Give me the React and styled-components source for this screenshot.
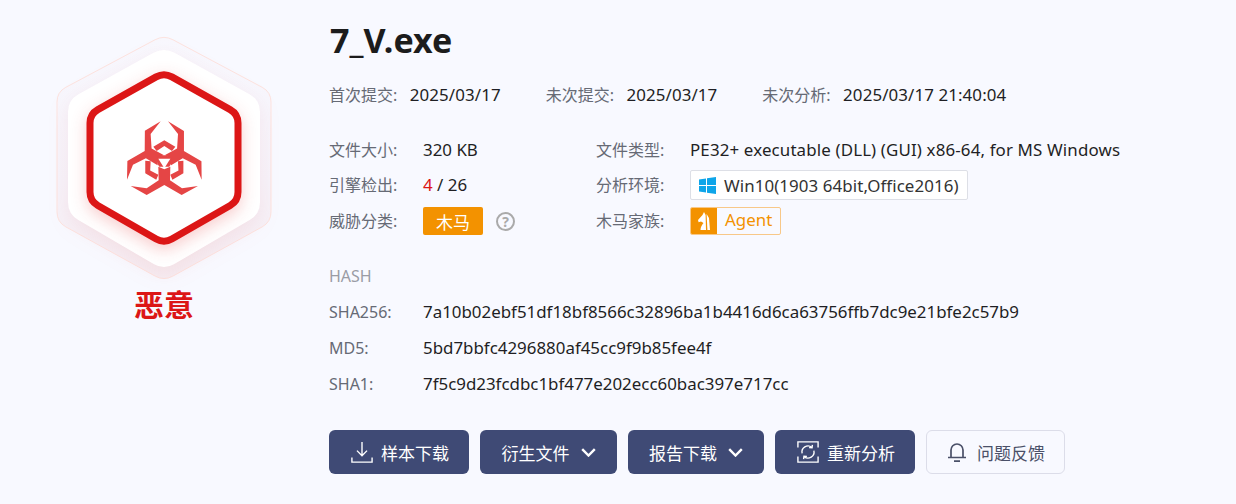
import React from "react";
import styled, { createGlobalStyle } from "styled-components";

const FONT = `"Noto Sans", "Noto Sans CJK SC", sans-serif`;

// polygon with rounded corners, used for the three shield outlines
const roundedHex = (points, r) => {
  const n = points.length;
  let d = "";
  points.forEach((p, i) => {
    const prev = points[(i + n - 1) % n];
    const next = points[(i + 1) % n];
    const toward = (a, b) => {
      const len = Math.hypot(b[0] - a[0], b[1] - a[1]);
      return [a[0] + ((b[0] - a[0]) * r) / len, a[1] + ((b[1] - a[1]) * r) / len];
    };
    const s = toward(p, prev);
    const e = toward(p, next);
    d += `${i === 0 ? "M" : "L"}${s[0]} ${s[1]} Q${p[0]} ${p[1]} ${e[0]} ${e[1]} `;
  });
  return d + "Z";
};

const hex = (cx, top, bottom, halfW, upper, lower) => [
  [cx, top],
  [cx + halfW, upper],
  [cx + halfW, lower],
  [cx, bottom],
  [cx - halfW, lower],
  [cx - halfW, upper],
];

const HAZARD_Y =
  "M62 228 L110 255 L163 225 L215 255 L264 228 L216 235 L180 211 L181 170 L163 178 L145 170 L146 211 L110 235 Z";
const HAZARD_CHEVRON = "M130 110 L163 91 L196 110 L186 123 L163 108 L140 123 Z";
const HAZARD_CORE = "M143 162 L142 145 L158 136 L168 136 L184 145 L183 162 L178 170 L148 170 Z";

const Biohazard = () => (
  <g transform="translate(110 110) scale(0.3333)">
    {[0, 120, 240].map((a) => (
      <g key={a} transform={`rotate(${a} 163 157)`} fill="#e54545">
        <path d={HAZARD_Y} />
        <path d={HAZARD_CHEVRON} />
      </g>
    ))}
    <path d={HAZARD_CORE} fill="#e54545" />
    <path d="M145 146 L181 146 L163 175 Z" fill="#ffffff" />
  </g>
);

const Shield = () => (
  <ShieldSvg viewBox="40 20 248 268">
    <defs>
      <linearGradient id="outerFill" x1="0" y1="0" x2="0" y2="1">
        <stop offset="0" stopColor="#f8f8fe" />
        <stop offset="0.6" stopColor="#f6f3fa" />
        <stop offset="1" stopColor="#f6edf2" />
      </linearGradient>
    </defs>
    <OuterHex fill="url(#outerFill)" d={roundedHex(hex(164, 35, 281, 107, 92, 222), 10)} />
    <MiddleHex d={roundedHex(hex(164, 47, 270, 96, 100, 214), 12)} />
    <InnerHex d={roundedHex(hex(164, 72.5, 243.5, 74, 114, 201), 9)} />
    <Biohazard />
  </ShieldSvg>
);

const DownloadIcon = () => (
  <ButtonSvg viewBox="0 0 24 24">
    <path d="M12 1v15M6.5 10.5l5.5 5.5 5.5-5.5M1 18v5h22v-5" />
  </ButtonSvg>
);

const ReanalyzeIcon = () => (
  <ButtonSvg viewBox="0 0 24 24">
    <path d="M1 7V1h22v6M1 17v6h22v-6" />
    <path d="M5.6 13.5a6.6 6.6 0 0 1 10.6-6.6M18.4 10.5a6.6 6.6 0 0 1-10.6 6.6" />
    <path d="M16.8 4.2l-.4 3.2-3.2-.3M7.2 19.8l.4-3.2 3.2.3" />
  </ButtonSvg>
);

const BellIcon = () => (
  <BellSvg viewBox="0 0 18 20">
    <path d="M0 15.5h18M3 15.5V8a6 6 0 0 1 12 0v7.5M6 19.2h6" />
  </BellSvg>
);

const Chevron = () => (
  <ChevronSvg viewBox="0 0 15 9">
    <path d="M1.2 1.2L7.5 7.5l6.3-6.3" />
  </ChevronSvg>
);

const WindowsIcon = () => (
  <svg width="17" height="17" viewBox="0 0 17 17">
    <path
      fill="#0ea5e9"
      d="M0 2.4L7 1.4V8H0zM8 1.2L17 0V8H8zM0 9H7V15.6L0 14.6zM8 9H17V17L8 15.8z"
    />
  </svg>
);

const HorseIcon = () => (
  <svg width="12" height="18" viewBox="0 0 12 18">
    <path fill="#ffffff" d="M6 0l1.6 3L8 18H2.5c0-3 1.4-5 3-7L3 9.6.6 10.2 0 8l4.5-5z" />
    <path fill="#ffffff" d="M8.6 2L11 6l1 12H9.4z" />
  </svg>
);

export default function App() {
  return (
    <>
      <GlobalStyle />
      <Page>
        <Verdict>
          <Shield />
          <VerdictLabel>恶意</VerdictLabel>
        </Verdict>
        <Details>
          <Title>7_V.exe</Title>
          <MetaRow>
            <MetaItem>
              <Label>首次提交:</Label>
              <DateValue>2025/03/17</DateValue>
            </MetaItem>
            <MetaItem>
              <Label>未次提交:</Label>
              <DateValue>2025/03/17</DateValue>
            </MetaItem>
            <MetaItem>
              <Label>未次分析:</Label>
              <DateValue>2025/03/17 21:40:04</DateValue>
            </MetaItem>
          </MetaRow>
          <InfoGrid>
            <Label>文件大小:</Label>
            <Value>320 KB</Value>
            <Label>文件类型:</Label>
            <WideValue>PE32+ executable (DLL) (GUI) x86-64, for MS Windows</WideValue>

            <Label>引擎检出:</Label>
            <Value>
              <Danger>4</Danger> / 26
            </Value>
            <Label>分析环境:</Label>
            <div>
              <EnvTag>
                <WindowsIcon />
                Win10(1903 64bit,Office2016)
              </EnvTag>
            </div>

            <Label>威胁分类:</Label>
            <ThreatCell>
              <ThreatBadge>木马</ThreatBadge>
              <HelpMark>?</HelpMark>
            </ThreatCell>
            <Label>木马家族:</Label>
            <div>
              <FamilyTag>
                <FamilyIcon>
                  <HorseIcon />
                </FamilyIcon>
                <FamilyName>Agent</FamilyName>
              </FamilyTag>
            </div>
          </InfoGrid>
          <HashHeading>HASH</HashHeading>
          <HashList>
            <Label>SHA256:</Label>
            <Value>7a10b02ebf51df18bf8566c32896ba1b4416d6ca63756ffb7dc9e21bfe2c57b9</Value>
            <Label>MD5:</Label>
            <Value>5bd7bbfc4296880af45cc9f9b85fee4f</Value>
            <Label>SHA1:</Label>
            <Value>7f5c9d23fcdbc1bf477e202ecc60bac397e717cc</Value>
          </HashList>
          <Actions>
            <ActionButton $width={140} $lead={2}>
              <DownloadIcon />
              样本下载
            </ActionButton>
            <ActionButton $width={137}>
              衍生文件
              <Chevron />
            </ActionButton>
            <ActionButton $width={136}>
              报告下载
              <Chevron />
            </ActionButton>
            <ActionButton $width={140} $lead={2}>
              <ReanalyzeIcon />
              重新分析
            </ActionButton>
            <FeedbackButton>
              <BellIcon />
              问题反馈
            </FeedbackButton>
          </Actions>
        </Details>
      </Page>
    </>
  );
}

const GlobalStyle = createGlobalStyle`
  html, body {
    margin: 0;
    background: #f8f9ff;
  }
  body {
    font-family: ${FONT};
  }
`;

const Page = styled.main`
  display: flex;
  width: 1236px;
  height: 504px;
  overflow: hidden;
  background: #f8f9ff;
`;

const Verdict = styled.section`
  display: flex;
  flex-direction: column;
  align-items: center;
  width: 329px;
  padding: 20px 1px 0 0;
  box-sizing: border-box;
`;

const ShieldSvg = styled.svg`
  width: 248px;
  height: 268px;
  overflow: visible;
`;

const OuterHex = styled.path`
  stroke: #fde3df;
  stroke-width: 1;
`;

const MiddleHex = styled.path`
  fill: #ffffff;
  filter: drop-shadow(0 6px 10px rgba(224, 90, 100, 0.1));
`;

const InnerHex = styled.path`
  fill: #ffffff;
  stroke: #dc1616;
  stroke-width: 7;
  filter: drop-shadow(0 5px 8px rgba(224, 27, 27, 0.22));
`;

const VerdictLabel = styled.div`
  margin-top: 0;
  font-size: 30px;
  line-height: 34px;
  font-weight: 700;
  color: #dc1616;
`;

const Details = styled.section`
  flex: 1;
  padding-top: 14px;
`;

const Title = styled.h1`
  margin: 0 0 0 1px;
  font-size: 34px;
  line-height: 52px;
  font-weight: 700;
  color: #1c1c1c;
`;

const MetaRow = styled.div`
  display: flex;
  gap: 45px;
  margin-top: 17px;
`;

const MetaItem = styled.div`
  display: flex;
  align-items: center;
  gap: 12.5px;
  line-height: 24px;
`;

const Label = styled.span`
  font-size: 16px;
  line-height: 24px;
  color: #666a75;
  white-space: nowrap;
`;

const Value = styled.span`
  font-size: 16.9px;
  line-height: 24px;
  color: #1f1f24;
  white-space: nowrap;
`;

const DateValue = styled(Value)`
  letter-spacing: 0.1px;
`;

const WideValue = styled(Value)`
  letter-spacing: 0.14px;
`;

const Danger = styled.span`
  color: #dc1616;
`;

const InfoGrid = styled.div`
  display: grid;
  grid-template-columns: 94px 173px 94px auto;
  grid-template-rows: 35px 36px 36px;
  align-items: center;
  margin-top: 25px;
  justify-content: start;
`;

const ThreatCell = styled.div`
  display: flex;
  align-items: center;
  gap: 13px;
`;

const ThreatBadge = styled.span`
  display: inline-flex;
  align-items: center;
  justify-content: center;
  width: 60px;
  height: 28px;
  border-radius: 2px;
  background: #f39200;
  color: #ffffff;
  font-size: 17px;
`;

const HelpMark = styled.span`
  display: inline-flex;
  align-items: center;
  justify-content: center;
  box-sizing: border-box;
  width: 19px;
  height: 19px;
  border: 2px solid #aaaaaa;
  border-radius: 50%;
  color: #aaaaaa;
  font-size: 14px;
  font-weight: 700;
`;

const EnvTag = styled.span`
  display: inline-flex;
  align-items: center;
  gap: 8px;
  box-sizing: border-box;
  height: 30px;
  padding: 0 8px;
  border: 1px solid #dddfe6;
  border-radius: 2px;
  background: #ffffff;
  color: #333333;
  font-size: 16.9px;
  letter-spacing: 0.08px;
`;

const FamilyTag = styled.span`
  display: inline-flex;
  align-items: stretch;
  box-sizing: border-box;
  height: 28px;
  border: 1px solid #f8c888;
  border-radius: 2px;
  overflow: hidden;
`;

const FamilyIcon = styled.span`
  display: inline-flex;
  align-items: center;
  justify-content: center;
  margin: -1px 0 -1px -1px;
  width: 27px;
  background: #f39200;
`;

const FamilyName = styled.span`
  display: inline-flex;
  align-items: center;
  padding: 0 8px;
  margin-top: -3px;
  color: #f39200;
  font-size: 16.9px;
`;

const HashHeading = styled.div`
  margin-top: 25px;
  font-size: 16px;
  line-height: 24px;
  color: #9a9ca5;
`;

const HashList = styled.div`
  display: grid;
  grid-template-columns: 94px auto;
  grid-auto-rows: 36px;
  align-items: center;
  justify-content: start;
  margin-top: 6px;
`;

const Actions = styled.div`
  display: flex;
  gap: 11px;
  margin-top: 28px;
`;

const ActionButton = styled.button`
  display: inline-flex;
  align-items: center;
  justify-content: center;
  gap: 8px;
  width: ${(p) => p.$width}px;
  height: 44px;
  padding: 0 0 0 ${(p) => p.$lead || 0}px;
  border: none;
  border-radius: 6px;
  background: #3f4a75;
  color: #ffffff;
  font-family: ${FONT};
  font-size: 17px;
`;

const FeedbackButton = styled.button`
  display: inline-flex;
  align-items: center;
  justify-content: center;
  gap: 11px;
  box-sizing: border-box;
  width: 139px;
  height: 44px;
  padding: 0 0 0 2px;
  border: 1px solid #dcdde9;
  border-radius: 6px;
  background: #f8f9ff;
  color: #4a5068;
  font-family: ${FONT};
  font-size: 17px;
`;

const ButtonSvg = styled.svg`
  width: 22px;
  height: 22px;
  fill: none;
  stroke: #ffffff;
  stroke-width: 1.5;
`;

const BellSvg = styled.svg`
  width: 18px;
  height: 20px;
  fill: none;
  stroke: #4a5068;
  stroke-width: 1.7;
`;

const ChevronSvg = styled.svg`
  width: 15px;
  height: 9px;
  margin-left: 3px;
  fill: none;
  stroke: #ffffff;
  stroke-width: 2.4;
`;
